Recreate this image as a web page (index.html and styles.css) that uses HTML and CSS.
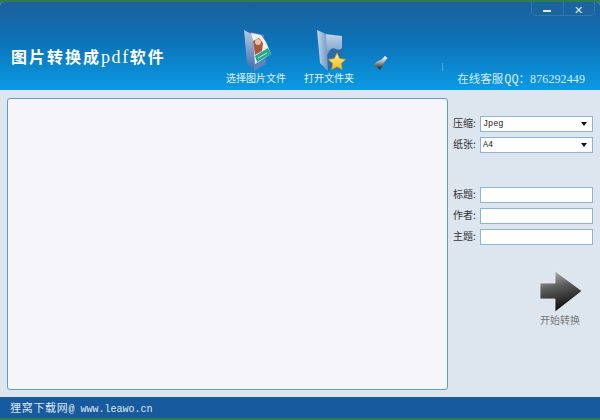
FILE: index.html
```html
<!DOCTYPE html>
<html lang="zh-CN">
<head>
    <meta charset="UTF-8">
    <title>图片转换成pdf软件</title>
    <link rel="stylesheet" href="styles.css">
</head>
<body>
    <div class="window">
        <div class="header">
            <div class="win-buttons">
                <span class="win-btn"><i class="min-mark"></i></span>
                <span class="win-btn close-btn">✕</span>
            </div>
            <h1 class="app-title">图片转换成<span class="latin">pdf</span>软件</h1>
            <div class="toolbar">
                <div class="tool">
                    <svg class="tool-icon" width="29" height="41" viewBox="0 0 29 41">
                        <defs>
                            <linearGradient id="folderA" x1="0" y1="0" x2="0" y2="1">
                                <stop offset="0" stop-color="#b4cbe6"/>
                                <stop offset="1" stop-color="#3f6aa6"/>
                            </linearGradient>
                        </defs>
                        <path d="M6 2 L20 5 L22 34 L10 41 Z" fill="#5c86bb"/>
                        <path d="M0 0 L9 5 L10 41 L3 33 Z" fill="url(#folderA)"/>
                        <path d="M7 3 L17 5 L22 12 L27 24 L11 34 L9 10 Z" fill="#f1efe9"/>
                        <path d="M9 11 L15 8 L19 13 L18 21 L11 25 Z" fill="#a55a3c"/>
                        <circle cx="14" cy="12" r="3" fill="#e8c3a5"/>
                        <path d="M11 26 L24 18 L27 24 L13 32 Z" fill="#27a88e"/>
                        <path d="M14 28 L23 23" stroke="#bfe9dc" stroke-width="1"/>
                    </svg>
                    <span class="tool-label">选择图片文件</span>
                </div>
                <div class="tool">
                    <svg class="tool-icon" width="29" height="41" viewBox="0 0 29 41">
                        <defs>
                            <linearGradient id="folderB" x1="0" y1="0" x2="0" y2="1">
                                <stop offset="0" stop-color="#c2d4e8"/>
                                <stop offset="0.5" stop-color="#7fa3c9"/>
                                <stop offset="1" stop-color="#2f69a8"/>
                            </linearGradient>
                            <linearGradient id="folderC" x1="0" y1="0" x2="1" y2="0">
                                <stop offset="0" stop-color="#c5d6ea"/>
                                <stop offset="1" stop-color="#6e96c4"/>
                            </linearGradient>
                            <linearGradient id="starFill" x1="0" y1="0" x2="0" y2="1">
                                <stop offset="0" stop-color="#fff39a"/>
                                <stop offset="1" stop-color="#f5b512"/>
                            </linearGradient>
                        </defs>
                        <path d="M8 4 L25 6 L25 29 L11 40 Z" fill="url(#folderB)"/>
                        <path d="M10 26 Q13 16 19 19 Q23 21 25 18 L25 29 L11 40 Z" fill="#2a6ba9"/>
                        <path d="M0 0 L9 4 L11 41 L3 33 Z" fill="url(#folderC)"/>
                        <path d="M20 23 L22.6 28.6 L28.6 29.4 L24.2 33.6 L25.3 39.6 L20 36.7 L14.7 39.6 L15.8 33.6 L11.4 29.4 L17.4 28.6 Z" fill="url(#starFill)" stroke="#d99a1a" stroke-width="0.6"/>
                    </svg>
                    <span class="tool-label">打开文件夹</span>
                </div>
                <svg class="brush" width="14" height="14" viewBox="0 0 14 14">
                    <defs>
                        <linearGradient id="brushFill" x1="0" y1="0" x2="0" y2="1">
                            <stop offset="0" stop-color="#ffffff"/>
                            <stop offset="0.4" stop-color="#b8b8b8"/>
                            <stop offset="1" stop-color="#141414"/>
                        </linearGradient>
                    </defs>
                    <path d="M11 0 L13.5 2 L9 8 Q8.5 12 6 13.5 Q3 11 0 9 Q2 5 7 4 Z" fill="url(#brushFill)"/>
                </svg>
            </div>
            <i class="tick"></i>
            <div class="service">在线客服<span class="mono">QQ</span>：<span class="digits">876292449</span></div>
        </div>

        <div class="main">
            <div class="image-list"></div>
            <div class="side">
                <div class="field">
                    <label>压缩:</label>
                    <div class="select">Jpeg<i class="caret"></i></div>
                </div>
                <div class="field">
                    <label>纸张:</label>
                    <div class="select">A4<i class="caret"></i></div>
                </div>
                <div class="meta">
                    <div class="field">
                        <label>标题:</label>
                        <div class="text-input"></div>
                    </div>
                    <div class="field">
                        <label>作者:</label>
                        <div class="text-input"></div>
                    </div>
                    <div class="field">
                        <label>主题:</label>
                        <div class="text-input"></div>
                    </div>
                </div>
                <div class="start">
                    <svg width="44" height="43" viewBox="0 0 44 43">
                        <defs>
                            <linearGradient id="arrowFill" x1="0" y1="0" x2="0.25" y2="1">
                                <stop offset="0" stop-color="#c4c4c4"/>
                                <stop offset="0.45" stop-color="#5d5d5d"/>
                                <stop offset="1" stop-color="#0e0e0e"/>
                            </linearGradient>
                        </defs>
                        <path d="M16 1 L43 21 L16 42 L16 29 L1 29 L1 13 L16 13 Z" fill="url(#arrowFill)" stroke="#eeeeee" stroke-width="0.8" stroke-linejoin="round"/>
                    </svg>
                    <span>开始转换</span>
                </div>
            </div>
        </div>

        <div class="footer">狸窝下载网<span class="mono">@ www.leawo.cn</span></div>
    </div>
</body>
</html>
```

FILE: styles.css
```css
* {
    box-sizing: border-box;
}

body {
    margin: 0;
    width: 600px;
    height: 420px;
    overflow: hidden;
    background: #2f7d4f;
    font-family: "Noto Sans CJK SC", "Liberation Serif", serif;
}

.window {
    height: 416px;
    margin-top: 2px;
    display: flex;
    flex-direction: column;
    background: #dde5ef;
    border-radius: 4px 4px 0 0;
    overflow: hidden;
}

.header {
    position: relative;
    height: 88px;
    flex-shrink: 0;
    display: flex;
    align-items: flex-start;
    background: linear-gradient(180deg, #1c6099 0%, #0d72b8 45%, #0a9be4 100%);
    color: #fff;
}

.win-buttons {
    position: absolute;
    top: 0;
    right: 5px;
    width: 64px;
    height: 14px;
    display: flex;
    background: #1b659f;
    border: 1px solid #2f78b0;
    border-top: none;
    border-radius: 0 0 5px 5px;
}

.win-btn {
    flex: 1;
    display: flex;
    align-items: center;
    justify-content: center;
    font-size: 11px;
    line-height: 12px;
    color: #dfeaf3;
}

.close-btn {
    border-left: 1px solid #2a73ab;
}

.min-mark {
    width: 8px;
    height: 2px;
    margin-top: 5px;
    background: #dfeaf3;
}

.app-title {
    margin: 44px 0 0 11px;
    width: 205px;
    flex-shrink: 0;
    font-size: 16px;
    line-height: 20px;
    font-weight: 700;
    letter-spacing: 2px;
    white-space: nowrap;
}

.latin {
    font-family: "Liberation Serif", serif;
    font-weight: 400;
    font-size: 18px;
    letter-spacing: 1.6px;
}

.toolbar {
    display: flex;
    align-items: flex-start;
    margin-top: 28px;
}

.tool {
    width: 80px;
    display: flex;
    flex-direction: column;
    align-items: center;
}

.tool-icon {
    display: block;
    margin-left: 5px;
}

.tool-label {
    font-size: 10px;
    line-height: 14px;
    color: #e3f1fb;
    white-space: nowrap;
}

.tool + .tool {
    margin-left: -7px;
}

.brush {
    margin: 26px 0 0 5px;
}

.tick {
    position: absolute;
    left: 442px;
    top: 61px;
    width: 1px;
    height: 8px;
    background: rgba(255, 255, 255, 0.25);
}

.service {
    position: absolute;
    right: 15px;
    top: 69px;
    font-size: 11.5px;
    line-height: 14px;
    color: #d9ecf8;
    white-space: nowrap;
}

.mono {
    font-family: "Liberation Mono", monospace;
}

.service .mono {
    font-size: 12px;
    margin-left: 1px;
}

.digits {
    font-family: "Liberation Serif", serif;
    font-size: 12px;
    letter-spacing: 0.1px;
}

.main {
    flex: 1;
    display: flex;
    padding: 8px 0 7px 7px;
}

.image-list {
    width: 441px;
    background: #f6f6fa;
    border: 1px solid #5aa0c6;
    border-radius: 3px;
}

.side {
    flex: 1;
    padding: 18px 7px 0 5px;
    display: flex;
    flex-direction: column;
}

.field {
    display: flex;
    align-items: center;
    height: 16px;
    margin-bottom: 5px;
    font-size: 10px;
    color: #333;
}

.field label {
    width: 27px;
    flex-shrink: 0;
    line-height: 14px;
    padding-bottom: 2px;
    white-space: nowrap;
}

.select,
.text-input {
    flex: 1;
    height: 16px;
    background: #fff;
    border: 1px solid #8db4d8;
    position: relative;
}

.select {
    font-family: "Liberation Mono", monospace;
    font-size: 8.5px;
    line-height: 14px;
    padding-left: 2px;
    color: #222;
}

.caret {
    position: absolute;
    right: 5px;
    top: 5px;
    border-left: 3px solid transparent;
    border-right: 3px solid transparent;
    border-top: 4px solid #111;
}

.meta {
    margin-top: 29px;
}

.start {
    margin: 20px 6px 0 0;
    align-self: flex-end;
    width: 52px;
    display: flex;
    flex-direction: column;
    align-items: center;
    font-size: 10px;
    line-height: 13px;
    color: #777;
}

.start svg {
    display: block;
}

.start span {
    margin-right: 2px;
}

.footer {
    height: 21px;
    flex-shrink: 0;
    padding-left: 10px;
    background: #175a9e;
    color: #dfe9f3;
    font-size: 11px;
    line-height: 21px;
    letter-spacing: 0.7px;
}

.footer .mono {
    font-size: 10px;
    letter-spacing: 0;
}
```
